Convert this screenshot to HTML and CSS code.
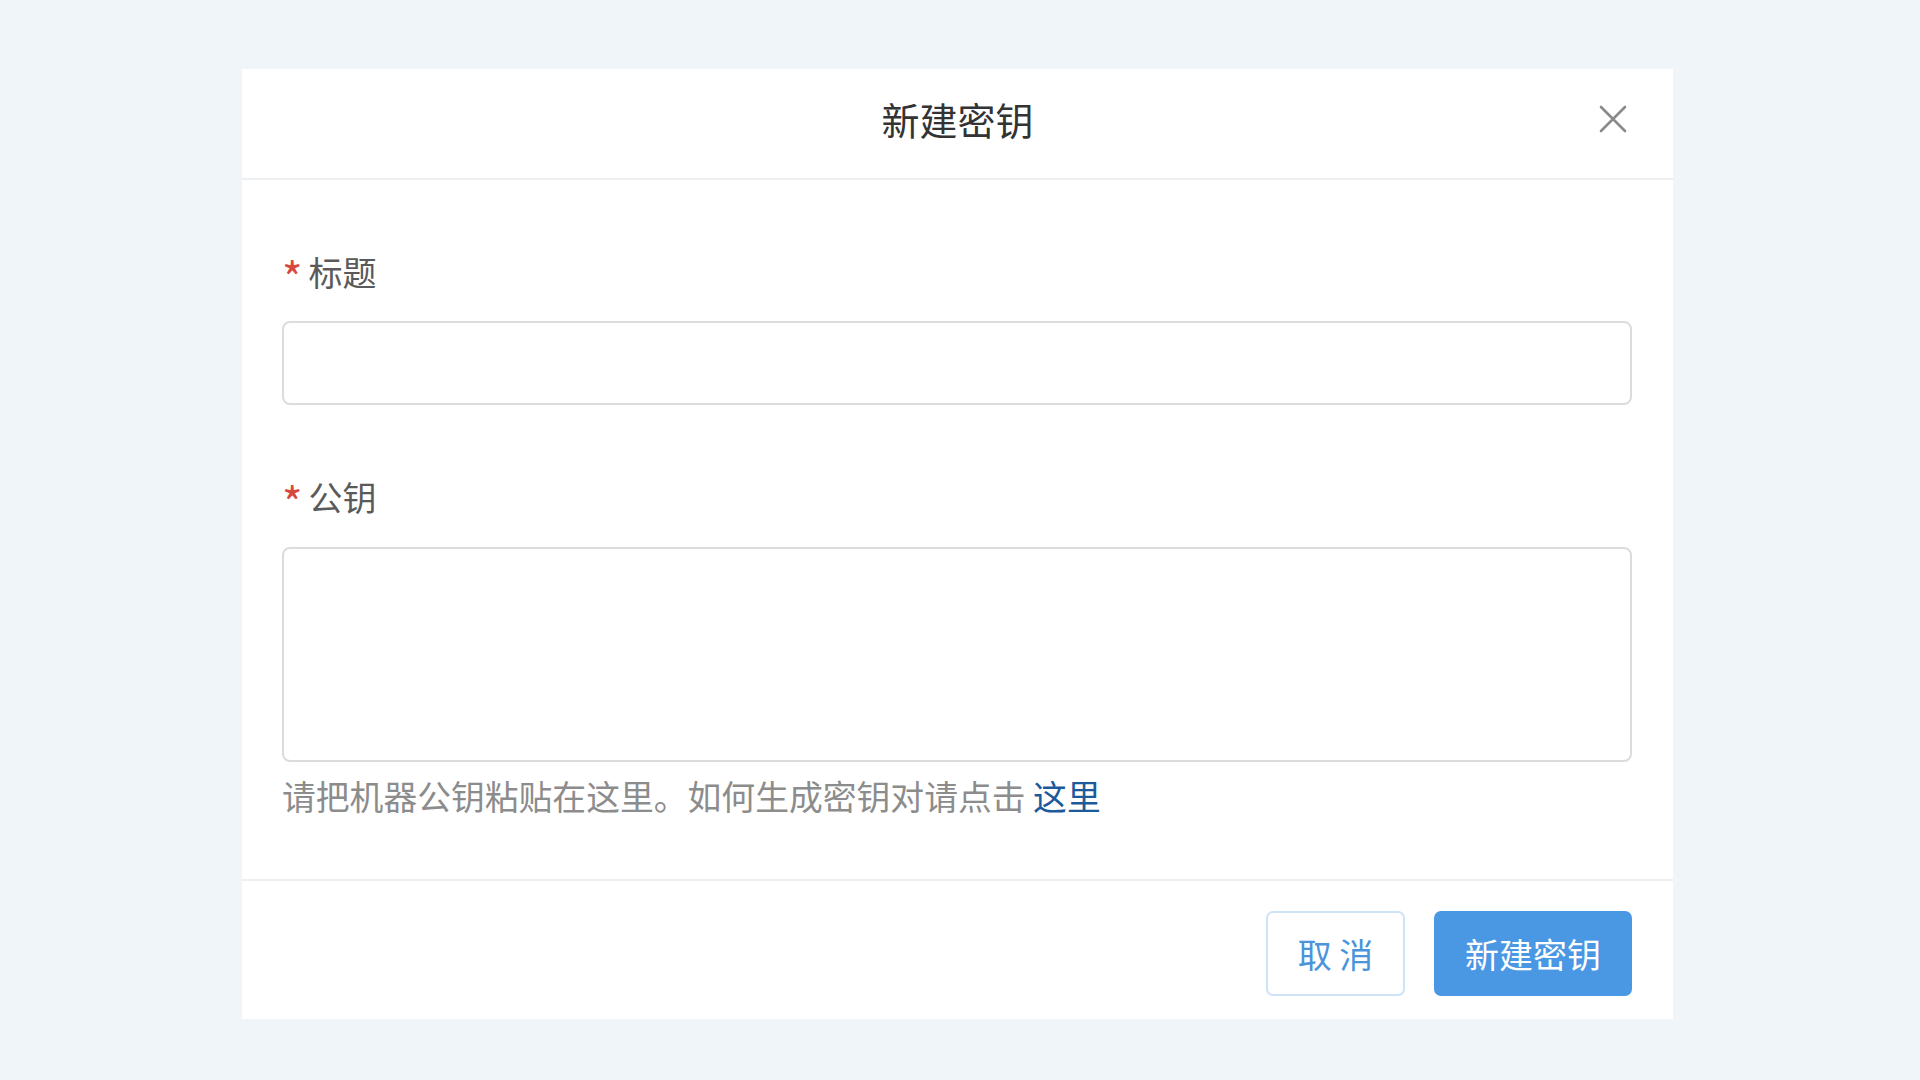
FILE: index.html
```html
<!DOCTYPE html>
<html lang="zh-CN">
<head>
    <meta charset="UTF-8">
    <meta name="viewport" content="width=device-width, initial-scale=1.0">
    <title>新建密钥</title>
    <link rel="stylesheet" href="styles.css">
</head>
<body>
    <div class="dialog">
        <div class="dialog-header">
            <span></span>
            <h1>新建密钥</h1>
            <button class="close-btn" type="button" aria-label="关闭">
                <svg width="28" height="28" viewBox="0 0 28 28">
                    <path d="M2 2 L26 26 M26 2 L2 26" stroke="#8a8a8a" stroke-width="2.6" stroke-linecap="round" fill="none"/>
                </svg>
            </button>
        </div>
        <form class="dialog-body" onsubmit="return false">
            <div class="form-group">
                <label for="title"><span class="required">*</span>标题</label>
                <input type="text" id="title" name="title">
            </div>
            <div class="form-group">
                <label for="publicKey"><span class="required">*</span>公钥</label>
                <textarea id="publicKey" name="publicKey"></textarea>
                <div class="help-text">请把机器公钥粘贴在这里。如何生成密钥对请点击 <a href="#">这里</a></div>
            </div>
        </form>
        <div class="dialog-footer">
            <button type="button" class="btn btn-default">取 消</button>
            <button type="submit" class="btn btn-primary">新建密钥</button>
        </div>
    </div>
</body>
</html>
```

FILE: styles.css
```css
body {
    font-family: "Noto Sans CJK SC", "Noto Sans", sans-serif;
    margin: 0;
    padding: 69px 0 61px 242px;
    background: #f0f5fa;
    min-height: 1080px;
    box-sizing: border-box;
}
.dialog {
    width: 1431px;
    background: #fff;
}
.dialog-header {
    display: grid;
    grid-template-columns: 1fr auto 1fr;
    align-items: center;
    height: 111px;
    padding: 0 46px 9px 46px;
    box-sizing: border-box;
    border-bottom: 2px solid #eeeff1;
}
h1 {
    margin: 0;
    font-size: 38px;
    font-weight: 400;
    color: #333;
    line-height: 1;
}
.close-btn {
    justify-self: end;
    width: 28px;
    height: 28px;
    padding: 0;
    border: none;
    background: none;
    cursor: pointer;
    display: flex;
}
.dialog-body {
    padding: 68px 41px 59px 40px;
    border-bottom: 2px solid #eeeff1;
}
.form-group + .form-group {
    margin-top: 68px;
}
label {
    display: block;
    font-size: 34px;
    line-height: 48px;
    color: #5a5a5a;
    margin-bottom: 25px;
}
.form-group + .form-group label {
    margin-bottom: 26px;
}
.required {
    position: relative;
    top: 9px;
    font-size: 44px;
    line-height: 0;
    color: #d8483d;
    margin-right: 6px;
}
input,
textarea {
    display: block;
    width: 100%;
    border: 2px solid #dcdcdc;
    border-radius: 8px;
    box-sizing: border-box;
    font-family: inherit;
    font-size: 30px;
    padding: 12px 18px;
    outline: none;
    resize: none;
}
input {
    height: 84px;
}
textarea {
    height: 215px;
}
.help-text {
    margin-top: 10px;
    font-size: 33.8px;
    line-height: 48px;
    color: #8c8c8c;
}
.help-text a {
    color: #1d5a9b;
    text-decoration: none;
}
.dialog-footer {
    display: flex;
    justify-content: flex-end;
    gap: 29px;
    padding: 30px 41px 23px;
}
.btn {
    height: 85px;
    border-radius: 7px;
    font-family: inherit;
    font-size: 34px;
    cursor: pointer;
    padding: 0;
}
.btn-default {
    width: 139px;
    background: #fff;
    color: #4a94dc;
    border: 2px solid #cfe3f6;
}
.btn-primary {
    width: 198px;
    background: #4a97e3;
    color: #fff;
    border: none;
}
```
